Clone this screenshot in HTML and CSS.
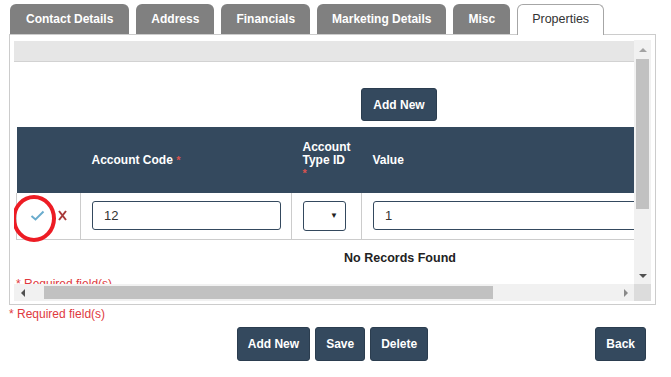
FILE: index.html
```html
<!DOCTYPE html>
<html lang="en">
<head>
    <meta charset="UTF-8">
    <meta name="viewport" content="width=device-width, initial-scale=1.0">
    <title>Properties</title>
    <link rel="stylesheet" href="styles.css">
</head>
<body>
    <div class="tabs">
        <div class="tab">Contact Details</div>
        <div class="tab">Address</div>
        <div class="tab">Financials</div>
        <div class="tab">Marketing Details</div>
        <div class="tab">Misc</div>
        <div class="tab active">Properties</div>
    </div>

    <div class="panel">
        <div class="scroll-frame">
            <div class="viewport">
                <div class="grid-content">
                    <div class="grid-toolbar"></div>
                    <div class="grid-actions">
                        <button class="btn">Add New</button>
                    </div>
                    <table class="grid">
                        <thead>
                            <tr>
                                <th class="col-edit"></th>
                                <th class="col-code">Account Code <span class="req">*</span></th>
                                <th class="col-type">Account Type ID <span class="req">*</span></th>
                                <th>Value</th>
                            </tr>
                        </thead>
                        <tbody>
                            <tr class="edit-row">
                                <td class="edit-cell">
                                    <span class="icon-ok">
                                        <svg width="15" height="11" viewBox="0 0 15 11"><polyline points="1.5,6 5.5,9.5 13.5,1.5" fill="none" stroke="#6aaccd" stroke-width="2"/></svg>
                                    </span>
                                    <span class="icon-cancel">
                                        <svg width="9" height="11" viewBox="0 0 9 11"><path d="M1 1 L8 10 M8 1 L1 10" stroke="#a83a3a" stroke-width="2"/></svg>
                                    </span>
                                    <span class="marker"></span>
                                </td>
                                <td><input class="field" type="text" value="12"></td>
                                <td>
                                    <span class="select-wrap"><select class="field select"></select></span>
                                </td>
                                <td><input class="field" type="text" value="1"></td>
                            </tr>
                            <tr class="empty-row">
                                <td colspan="4">No Records Found</td>
                            </tr>
                        </tbody>
                    </table>
                    <p class="required inner">* Required field(s)</p>
                </div>
            </div>

            <div class="vbar">
                <div class="sb-btn"><span class="arrow up"></span></div>
                <div class="sb-track"><div class="sb-thumb"></div></div>
                <div class="sb-btn"><span class="arrow down"></span></div>
            </div>
            <div class="hbar">
                <div class="sb-btn"><span class="arrow left"></span></div>
                <div class="sb-track"><div class="sb-thumb"></div></div>
                <div class="sb-btn"><span class="arrow right"></span></div>
            </div>
            <div class="sb-corner"></div>
        </div>
    </div>

    <p class="required">* Required field(s)</p>

    <div class="form-actions">
        <div></div>
        <div class="button-group">
            <button class="btn">Add New</button>
            <button class="btn">Save</button>
            <button class="btn">Delete</button>
        </div>
        <div class="back">
            <button class="btn">Back</button>
        </div>
    </div>
</body>
</html>
```

FILE: styles.css
```css
body {
    font-family: 'Liberation Sans', Arial, sans-serif;
    background-color: #fff;
    color: #333;
    margin: 0;
    padding: 0;
}
.tabs {
    display: flex;
    gap: 7px;
    padding: 4px 0 0 10px;
}
.tab {
    height: 30px;
    line-height: 30px;
    padding: 0 15px;
    background-color: #808080;
    color: #fff;
    font-size: 12px;
    font-weight: bold;
    border-radius: 6px 6px 0 0;
    box-sizing: border-box;
}
.tab:first-child {
    padding: 0 16px;
}
.tab.active {
    background-color: #fff;
    color: #333;
    font-size: 12.5px;
    font-weight: normal;
    line-height: 28px;
    padding: 0 14px;
    border: 1px solid #a6a6a6;
    border-bottom: none;
    height: 31px;
    margin-bottom: -1px;
    position: relative;
    z-index: 1;
}
.panel {
    margin: 0 15px 0 9px;
    border: 1px solid #ccc;
    height: 271px;
    padding: 5px 4px 3px 4px;
    box-sizing: border-box;
}
.scroll-frame {
    display: grid;
    grid-template-columns: 1fr 17px;
    grid-template-rows: 244px 17px;
    background-color: #fff;
}
.viewport {
    overflow: hidden;
}
.vbar,
.hbar {
    display: flex;
    background-color: #f1f1f1;
}
.vbar {
    flex-direction: column;
}
.sb-btn {
    flex: 0 0 17px;
    display: flex;
    align-items: center;
    justify-content: center;
}
.sb-track {
    flex: 1;
    display: flex;
}
.vbar .sb-track {
    flex-direction: column;
    padding: 2px 2px 0;
}
.hbar .sb-track {
    padding: 2px 0 2px 13px;
}
.sb-thumb {
    background-color: #c1c1c1;
}
.vbar .sb-thumb {
    height: 150px;
}
.hbar .sb-thumb {
    width: 449px;
}
.sb-corner {
    background-color: #dcdcdc;
}
.arrow {
    width: 0;
    height: 0;
    border: 4px solid transparent;
}
.arrow.up {
    border-top: none;
    border-bottom-color: #a3a3a3;
    margin-top: 2px;
}
.arrow.down {
    border-bottom: none;
    border-top-color: #505050;
}
.arrow.left {
    border-left: none;
    border-right-color: #505050;
}
.arrow.right {
    border-right: none;
    border-left-color: #8a8a8a;
}
.grid-content {
    width: 770px;
    padding-top: 1px;
}
.grid-toolbar {
    height: 20px;
    background-color: #e6e6e6;
    border-bottom: 1px solid #d2d2d2;
}
.grid-actions {
    display: flex;
    justify-content: center;
    padding: 26px 0 6px;
}
.btn {
    height: 34px;
    padding: 0 10px;
    background-color: #34495e;
    color: #fff;
    border: 1px solid #2b3d4f;
    border-radius: 3px;
    font-family: 'Liberation Sans', Arial, sans-serif;
    font-size: 12px;
    font-weight: bold;
    cursor: pointer;
}
.grid-actions .btn {
    height: 33px;
    padding: 0 11px;
}
.grid {
    margin-left: 2px;
    width: 768px;
    border-collapse: collapse;
    table-layout: fixed;
}
.grid th {
    height: 66px;
    padding: 0 10px 0 11px;
    background-color: #34495e;
    color: #fff;
    font-size: 12px;
    font-weight: bold;
    line-height: 13px;
    text-align: left;
    box-sizing: border-box;
}
.grid th.col-edit { width: 64px; }
.grid th.col-code { width: 211px; }
.grid th.col-type { width: 70px; }
.req {
    color: #d9534f;
    font-size: 11px;
}
.edit-row td {
    height: 46px;
    padding: 0 10px 0 11px;
    border: 1px solid #ccc;
    border-top: none;
    box-sizing: border-box;
}
.edit-cell {
    position: relative;
    white-space: nowrap;
}
.edit-row td.edit-cell {
    padding: 0 0 0 13px;
}
.icon-ok,
.icon-cancel {
    display: inline-block;
    vertical-align: middle;
}
.icon-cancel {
    margin-left: 9px;
}
.marker {
    position: absolute;
    left: -5px;
    top: 2px;
    width: 44px;
    height: 47px;
    border: 4px solid #ed1c24;
    border-radius: 50%;
    box-sizing: border-box;
}
.field {
    width: 100%;
    height: 29px;
    padding: 0 11px;
    border: 1px solid #34495e;
    border-radius: 3px;
    font-family: 'Liberation Sans', Arial, sans-serif;
    font-size: 13px;
    color: #333;
    box-sizing: border-box;
    background: #fff;
}
.select-wrap {
    display: inline-block;
    position: relative;
}
.select {
    appearance: none;
    width: 43px;
    height: 30px;
    display: block;
}
.select-wrap::after {
    content: "\25BC";
    position: absolute;
    right: 8px;
    top: 10px;
    font-size: 8px;
    color: #222;
}
.empty-row td {
    height: 35px;
    text-align: center;
    font-size: 12.5px;
    font-weight: bold;
    color: #222;
}
.required {
    margin: 2px 0 6px 9px;
    color: #e0393e;
    font-size: 12px;
    line-height: 14px;
}
.required.inner {
    margin: 0 0 0 2px;
}
.form-actions {
    display: grid;
    grid-template-columns: 1fr auto 1fr;
    margin: 0 15px 0 9px;
}
.button-group {
    display: flex;
    gap: 5px;
}
.back {
    display: flex;
    justify-content: flex-end;
    padding-right: 10px;
}
```
